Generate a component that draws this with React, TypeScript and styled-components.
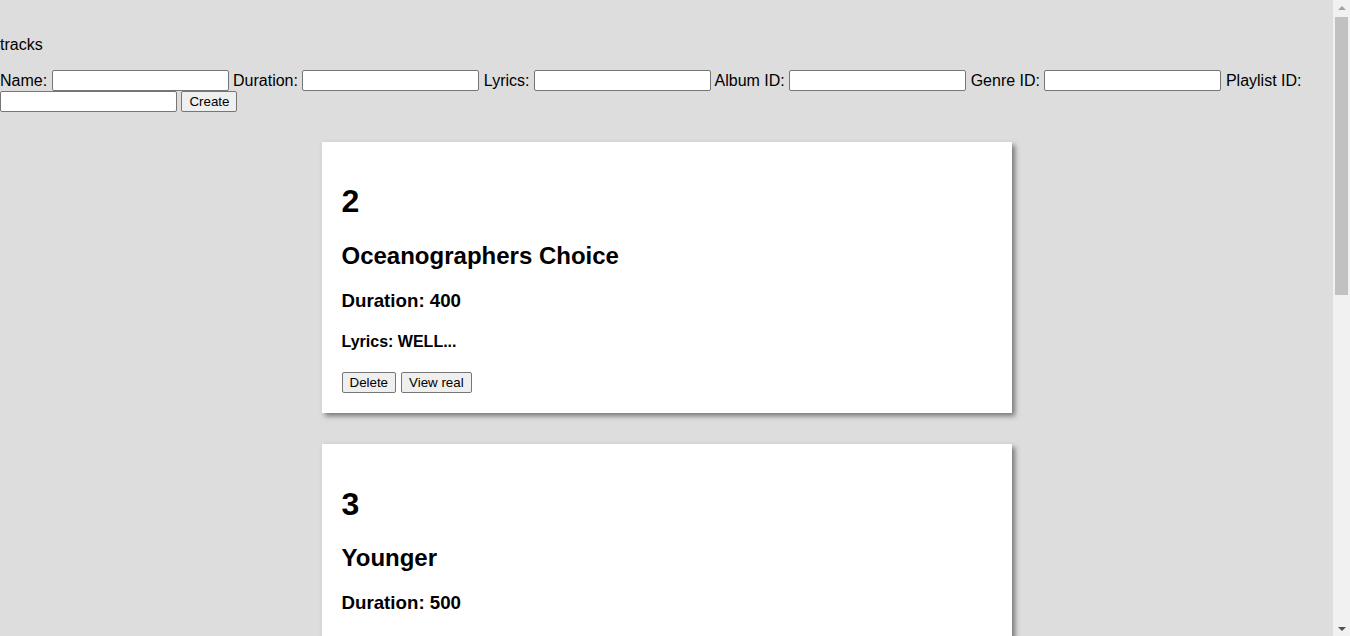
import styled, { createGlobalStyle } from 'styled-components';

type Track = {
  id: number;
  name: string;
  duration: number;
  lyrics: string;
};

const tracks: Track[] = [
  { id: 2, name: 'Oceanographers Choice', duration: 400, lyrics: 'WELL...' },
  { id: 3, name: 'Younger', duration: 500, lyrics: 'OH...' },
  { id: 4, name: 'Hold On', duration: 300, lyrics: 'YEAH...' },
  { id: 5, name: 'Midnight City', duration: 250, lyrics: 'WAITING...' },
];

const fields = ['Name', 'Duration', 'Lyrics', 'Album ID', 'Genre ID', 'Playlist ID'];

const GlobalStyle = createGlobalStyle`
  html, body {
    margin: 0;
    padding: 0;
    background-color: #dddddd;
    font-family: "Liberation Sans", Arial, sans-serif;
    color: #000;
  }
`;

function App() {
  return (
    <SWrapper>
      <GlobalStyle />
      <STitle>tracks</STitle>
      <SForm onSubmit={(e) => e.preventDefault()}>
        {fields.map((field) => (
          <span key={field}>
            {field}: <SInput type="text" />{' '}
          </span>
        ))}
        <SButton type="submit">Create</SButton>
      </SForm>
      <SList>
        {tracks.map((track) => (
          <SCard key={track.id}>
            <SId>{track.id}</SId>
            <SName>{track.name}</SName>
            <SDuration>Duration: {track.duration}</SDuration>
            <SLyrics>Lyrics: {track.lyrics}</SLyrics>
            <SActions>
              <SButton>Delete</SButton>
              <SButton>View real</SButton>
            </SActions>
          </SCard>
        ))}
      </SList>
      {/* window scrollbar look-alike */}
      <SScrollbar aria-hidden>
        <SArrow $dir="up" />
        <STrack>
          <SThumb />
        </STrack>
        <SArrow $dir="down" />
      </SScrollbar>
    </SWrapper>
  );
}

const SWrapper = styled.div`
  padding-top: 36px;
  padding-bottom: 60px;
  padding-right: 17px;
`;

const STitle = styled.p`
  margin: 0 0 16px 0;
  font-size: 16px;
`;

const SForm = styled.form`
  font-size: 16px;
  line-height: 21px;
  margin-bottom: 30px;
`;

const SInput = styled.input`
  box-sizing: border-box;
  width: 177px;
  height: 21px;
  padding: 1px 2px;
  border: 1px solid #767676;
  border-radius: 2px;
  background: #fff;
  font-family: "Liberation Sans", Arial, sans-serif;
  font-size: 13.33px;
  vertical-align: bottom;
`;

const SButton = styled.button`
  box-sizing: border-box;
  height: 21px;
  padding: 1px 7px;
  border: 1px solid #767676;
  border-radius: 2px;
  background-color: #efefef;
  color: #000;
  font-family: "Liberation Sans", Arial, sans-serif;
  font-size: 13.33px;
  vertical-align: bottom;
`;

const SList = styled.div`
  display: flex;
  flex-direction: column;
  align-items: center;
  gap: 31px;
`;

const SCard = styled.div`
  box-sizing: border-box;
  width: 690px;
  padding: 20px;
  background-color: #fff;
  box-shadow: 3px 3px 5px #777;
`;

const SId = styled.h1`
  font-size: 32px;
  margin: 21.44px 0;
`;

const SName = styled.h2`
  font-size: 24px;
  margin: 19.92px 0;
`;

const SDuration = styled.h3`
  font-size: 18.72px;
  margin: 18.72px 0;
`;

const SLyrics = styled.h4`
  font-size: 16px;
  margin: 21.28px 0;
`;

const SActions = styled.div`
  display: flex;
  gap: 5px;
`;

const SScrollbar = styled.div`
  position: fixed;
  top: 0;
  right: 0;
  bottom: 0;
  width: 17px;
  display: flex;
  flex-direction: column;
  background-color: #f1f1f1;
`;

const SArrow = styled.div<{ $dir: 'up' | 'down' }>`
  height: 15px;
  display: flex;
  align-items: center;
  justify-content: center;

  &::before {
    content: '';
    width: 0;
    height: 0;
    border-left: 4px solid transparent;
    border-right: 4px solid transparent;
    ${({ $dir }) =>
      $dir === 'up' ? 'border-bottom: 4px solid #a3a3a3;' : 'border-top: 4px solid #505050;'}
  }
`;

const STrack = styled.div`
  flex: 1;
  padding: 2px 2px 0 2px;
`;

const SThumb = styled.div`
  height: 278px;
  background-color: #c1c1c1;
`;

export default App;
